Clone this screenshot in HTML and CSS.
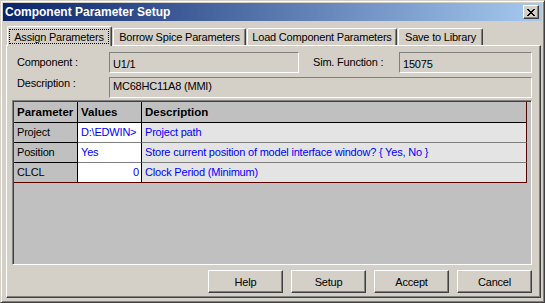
FILE: index.html
```html
<!DOCTYPE html>
<html>
<head>
<meta charset="utf-8">
<title>Component Parameter Setup</title>
<link rel="stylesheet" href="styles.css">
</head>
<body>
<div class="window">
  <div class="titlebar">
    <span class="title">Component Parameter Setup</span>
    <button class="close" aria-label="Close">
      <svg width="8" height="7" viewBox="0 0 8 7" shape-rendering="crispEdges"><path fill="#000" d="M0 0h2v1H0zM6 0h2v1H6zM1 1h2v1H1zM5 1h2v1H5zM2 2h4v1H2zM3 3h2v1H3zM2 4h4v1H2zM1 5h2v1H1zM5 5h2v1H5zM0 6h2v1H0zM6 6h2v1H6z"/></svg>
    </button>
  </div>
  <div class="tabs">
    <div class="tab tab-active"><span class="focus">Assign Parameters</span></div>
    <div class="tab tab-borrow">Borrow Spice Parameters</div>
    <div class="tab tab-load">Load Component Parameters</div>
    <div class="tab tab-save">Save to Library</div>
  </div>
  <div class="page">
    <div class="fields">
      <div class="row">
        <span class="label">Component :</span>
        <div class="field f-comp">U1/1</div>
        <span class="label label-sim">Sim. Function :</span>
        <div class="field f-sim">15075</div>
      </div>
      <div class="row">
        <span class="label label-desc">Description :</span>
        <div class="field f-desc">MC68HC11A8 (MMI)</div>
      </div>
    </div>
    <div class="gridbox">
      <div class="ptable">
        <div class="hcell">Parameter</div>
        <div class="hcell">Values</div>
        <div class="hcell hlast">Description</div>

        <div class="pcell">Project</div>
        <div class="vcell">D:\EDWIN&gt;</div>
        <div class="dcell">Project path</div>

        <div class="pcell">Position</div>
        <div class="vcell">Yes</div>
        <div class="dcell">Store current position of model interface window? { Yes, No }</div>

        <div class="pcell lastrow">CLCL</div>
        <div class="vcell num lastrow">0</div>
        <div class="dcell lastrow">Clock Period (Minimum)</div>
      </div>
    </div>
    <div class="buttons">
      <button class="btn">Help</button>
      <button class="btn">Setup</button>
      <button class="btn">Accept</button>
      <button class="btn">Cancel</button>
    </div>
  </div>
</div>
</body>
</html>
```
FILE: styles.css
```css
body {
  margin: 0;
  font-family: "Liberation Sans", Arial, sans-serif;
  font-size: 11px;
  letter-spacing: -0.2px;
  background: #d4d0c8;
  color: #000;
}

.window {
  width: 545px;
  height: 303px;
  box-sizing: border-box;
  border: 1px solid;
  border-color: #d4d0c8 #404040 #404040 #d4d0c8;
  box-shadow: inset 1px 1px #fff, inset -1px -1px #808080;
  padding: 2px;
  background: #d4d0c8;
  display: flex;
  flex-direction: column;
}

.titlebar {
  flex: none;
  height: 18px;
  display: flex;
  align-items: center;
  justify-content: space-between;
  padding: 0 3px 0 2px;
  background: linear-gradient(to right, #0a246a, #a6caf0);
}

.title {
  color: #fff;
  font-weight: bold;
  font-size: 12px;
  letter-spacing: 0;
}

.close {
  width: 16px;
  height: 14px;
  box-sizing: border-box;
  border: 1px solid;
  border-color: #fff #404040 #404040 #fff;
  box-shadow: inset -1px -1px #808080;
  background: #d4d0c8;
  padding: 0;
  display: flex;
  align-items: center;
  justify-content: center;
}

.tabs {
  flex: none;
  display: flex;
  align-items: flex-end;
  height: 19px;
  margin-top: 5px;
  padding-left: 4px;
}

.tab {
  box-sizing: border-box;
  height: 17px;
  border-top: 1px solid #fff;
  border-left: 1px solid #fff;
  border-right: 1px solid #404040;
  box-shadow: inset -1px 0 #808080;
  border-top-left-radius: 2px;
  border-top-right-radius: 2px;
  text-align: center;
  line-height: 15px;
  padding-top: 1px;
  margin-left: 1px;
  white-space: nowrap;
  background: #d4d0c8;
}

.tab-active {
  width: 105px;
  height: 20px;
  margin-left: 0;
  margin-bottom: -1px;
  padding-top: 0;
  position: relative;
  z-index: 1;
}

.focus {
  display: block;
  box-sizing: border-box;
  width: 100px;
  height: 15px;
  margin: 2px 0 0 1px;
  border: 1px dotted #000;
  padding-top: 1px;
  line-height: 12px;
}

.tab-borrow { width: 133px; }
.tab-load { width: 150px; }
.tab-save { width: 85px; }

.page {
  flex: none;
  margin-left: 3px;
  width: 535px;
  height: 253px;
  box-sizing: border-box;
  border: 1px solid;
  border-color: #fff #404040 #404040 #fff;
  box-shadow: inset -1px -1px #808080;
}

.fields {
  padding: 6px 0 0 10px;
}

.row {
  display: flex;
  align-items: center;
  height: 21px;
}

.row + .row {
  margin-top: 4px;
}

.label {
  flex: none;
  width: 92px;
  line-height: 13px;
}

.label-sim {
  margin-left: 14px;
  width: 86px;
}

.label-desc {
  align-self: flex-start;
}

.field {
  flex: none;
  box-sizing: border-box;
  height: 21px;
  border: 1px solid;
  border-color: #808080 #fff #fff #808080;
  padding: 5px 0 0 3px;
  line-height: 13px;
  white-space: nowrap;
}

.f-comp { width: 190px; }
.f-sim { width: 133px; }
.f-desc { width: 423px; padding-top: 2px; }

.gridbox {
  margin: 2px 0 0 5px;
  width: 520px;
  height: 165px;
  box-sizing: border-box;
  border: 1px solid;
  border-color: #808080 #fff #fff #808080;
  box-shadow: inset 1px 1px #404040;
  padding: 1px;
  background: #c0c0c0;
}

.ptable {
  display: grid;
  grid-template-columns: 64px 64px 385px;
  grid-template-rows: 21px repeat(3, 20px);
}

.ptable > div {
  box-sizing: border-box;
  border-right: 1px solid #000;
  border-bottom: 1px solid #808080;
  padding-left: 3px;
  line-height: 19px;
  white-space: nowrap;
  overflow: hidden;
}

.ptable > .hcell {
  background: #c0c0c0;
  border-bottom-color: #000;
  font-weight: bold;
  font-size: 11.5px;
  letter-spacing: 0;
  line-height: 20px;
}

.ptable > .hlast,
.ptable > .dcell {
  border-right-color: #5a0000;
}

.ptable > .pcell {
  background: #c0c0c0;
  border-bottom-color: #000;
}

.ptable > .vcell {
  background: #fff;
  color: #0000ff;
}

.ptable > .dcell {
  background: #e4e4e4;
  color: #0000ff;
}

.ptable > .num {
  text-align: right;
  padding: 0 2px 0 0;
}

.ptable > .lastrow {
  border-bottom-color: #5a0000;
}

.buttons {
  display: flex;
  justify-content: flex-end;
  gap: 8px;
  margin: 5px 0 0 5px;
  width: 520px;
}

.btn {
  width: 75px;
  height: 23px;
  box-sizing: border-box;
  border: 1px solid;
  border-color: #fff #404040 #404040 #fff;
  box-shadow: inset -1px -1px #808080;
  background: #d4d0c8;
  font: inherit;
  letter-spacing: inherit;
  color: #000;
  padding: 0;
}
```
